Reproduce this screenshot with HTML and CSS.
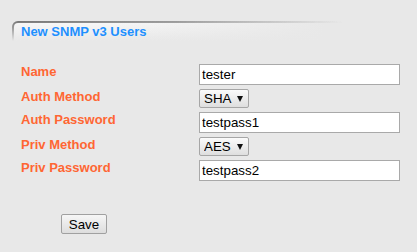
FILE: index.html
```html
<!DOCTYPE html>
<html lang="en">
<head>
    <meta charset="UTF-8">
    <title>New SNMP v3 Users</title>
    <link rel="stylesheet" href="styles.css">
</head>
<body>
    <div class="section-head">
        <div class="section-title">New SNMP v3 Users</div>
    </div>

    <table class="form-table">
        <tr>
            <td class="label">Name</td>
            <td><input type="text" class="field" value="tester"></td>
        </tr>
        <tr>
            <td class="label">Auth Method</td>
            <td>
                <span class="select-wrap">
                    <select class="picker">
                        <option>SHA</option>
                        <option>MD5</option>
                    </select>
                </span>
            </td>
        </tr>
        <tr>
            <td class="label">Auth Password</td>
            <td><input type="text" class="field" value="testpass1"></td>
        </tr>
        <tr>
            <td class="label">Priv Method</td>
            <td>
                <span class="select-wrap">
                    <select class="picker">
                        <option>AES</option>
                        <option>DES</option>
                    </select>
                </span>
            </td>
        </tr>
        <tr>
            <td class="label">Priv Password</td>
            <td><input type="text" class="field" value="testpass2"></td>
        </tr>
    </table>

    <div class="actions">
        <button class="btn">Save</button>
    </div>
</body>
</html>
```

FILE: styles.css
```css
body {
    margin: 0;
    background: #e8e8e8;
    font-family: "Liberation Sans", Arial, sans-serif;
    height: 252px;
    overflow: hidden;
}

/* Section header with fading frame */
.section-head {
    margin: 21px 0 0 12px;
    width: 330px;
    height: 20px;
    padding: 2px 0 0 2px;
    box-sizing: border-box;
    border-top-left-radius: 6px;
    background:
        linear-gradient(to bottom, rgba(232, 232, 232, 0) 0, rgba(232, 232, 232, 0.3) 30%, #e8e8e8 100%),
        linear-gradient(to right, #747474 0, #9a9a9a 50%, rgba(232, 232, 232, 0) 100%);
}

.section-title {
    height: 100%;
    padding: 1px 0 0 7px;
    box-sizing: border-box;
    border-top-left-radius: 4px;
    background:
        linear-gradient(to right, rgba(232, 232, 232, 0) 30%, #e8e8e8 95%),
        linear-gradient(to bottom, #f7f7f7 0, #ececec 70%, #e8e8e8 100%);
    color: #1e90ff;
    font-size: 13px;
    font-weight: bold;
    line-height: 15px;
}

.form-table {
    margin: 21px 0 0 19px;
    border-collapse: collapse;
}

.form-table td {
    padding: 2px;
    vertical-align: top;
}

.label {
    width: 174px;
    color: #ff6633;
    font-size: 13px;
    font-weight: bold;
    line-height: 15px;
}

.field {
    display: block;
    width: 201px;
    height: 21px;
    box-sizing: border-box;
    margin: 0;
    padding: 1px 2px;
    border: 1px solid #a9a9a9;
    background: #fff;
    font-family: "Liberation Sans", Arial, sans-serif;
    font-size: 13.33px;
    color: #000;
}

.select-wrap {
    position: relative;
    display: block;
    width: 50px;
}

.select-wrap::after {
    content: "";
    position: absolute;
    top: 7px;
    right: 6px;
    border-left: 3px solid transparent;
    border-right: 3px solid transparent;
    border-top: 6px solid #111;
    pointer-events: none;
}

.picker {
    display: block;
    width: 50px;
    height: 19px;
    box-sizing: border-box;
    margin: 0;
    padding: 0 0 0 4px;
    border: 1px solid #a6a6a6;
    border-radius: 2px;
    background: linear-gradient(to bottom, #fbfbfb, #dedede);
    font-family: "Liberation Sans", Arial, sans-serif;
    font-size: 13.33px;
    color: #000;
    appearance: none;
    -webkit-appearance: none;
}

.actions {
    padding: 31px 0 0 61px;
}

.btn {
    width: 46px;
    height: 20px;
    margin: 0;
    padding: 0;
    border: 1px solid #a0a0a0;
    border-radius: 2px;
    background: linear-gradient(to bottom, #f6f6f6, #dddddd);
    font-family: "Liberation Sans", Arial, sans-serif;
    font-size: 13.33px;
    color: #000;
}
```
